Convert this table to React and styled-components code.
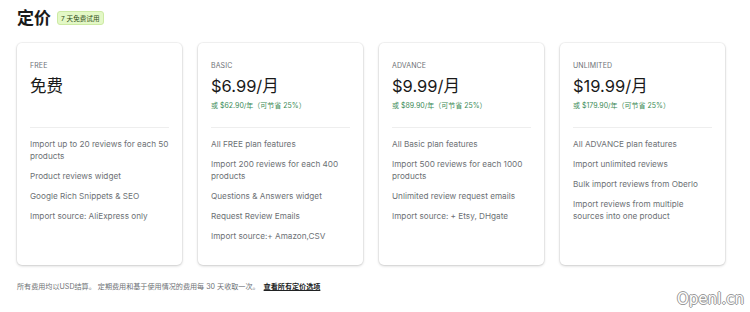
import React from "react";
import styled, { createGlobalStyle } from "styled-components";

const GlobalStyle = createGlobalStyle`
  html, body {
    margin: 0;
    padding: 0;
    background: #ffffff;
  }
  body {
    font-family: Inter, "Noto Sans CJK SC", sans-serif;
    color: #202223;
  }
`;

const Page = styled.div`
  position: relative;
  width: 750px;
  height: 312px;
  padding: 7px 17px 0 17px;
  box-sizing: border-box;
  overflow: hidden;
`;

const Header = styled.div`
  display: flex;
  align-items: center;
  gap: 6px;
  height: 22px;
`;

const Title = styled.h1`
  margin: 0;
  font-size: 17px;
  font-weight: 700;
  line-height: 22px;
  color: #1a1a1a;
`;

const Badge = styled.span`
  display: inline-flex;
  align-items: center;
  height: 12px;
  padding: 0 3px;
  border-radius: 3px;
  background: #e3f8c6;
  border: 1px solid #cdeaa4;
  font-size: 6.6px;
  color: #2f4d17;
`;

const Cards = styled.div`
  display: grid;
  grid-template-columns: repeat(4, 165px);
  gap: 16px;
  margin-top: 14px;
`;

const Card = styled.div`
  height: 222px;
  box-sizing: border-box;
  padding: 18px 13px 0 13px;
  background: #fff;
  border-radius: 5px;
  box-shadow: 0 0 0 1px rgba(0, 0, 0, 0.04), 0 1px 3px rgba(0, 0, 0, 0.18);
`;

const PlanName = styled.div`
  font-size: 7px;
  line-height: 10px;
  color: #6d7175;
  letter-spacing: 0.1px;
`;

const Price = styled.div`
  margin-top: 4px;
  font-size: 16.5px;
  line-height: 22px;
  color: #1a1a1a;
`;

const Yearly = styled.div`
  height: 11px;
  margin-top: 3px;
  font-size: 7px;
  line-height: 11px;
  color: #3b8a55;
`;

const Divider = styled.div`
  height: 1px;
  margin: 16px 0 10px 0;
  background: #eeeeee;
`;

const Features = styled.ul`
  list-style: none;
  margin: 0;
  padding: 0;
  display: flex;
  flex-direction: column;
  gap: 8px;
`;

const Feature = styled.li`
  font-size: 8.2px;
  line-height: 12px;
  color: #6d7175;
`;

const Footer = styled.p`
  margin: 17px 0 0 0;
  font-size: 7.1px;
  line-height: 10px;
  color: #6d7175;
`;

const FooterLink = styled.a`
  margin-left: 4px;
  font-weight: 700;
  color: #202223;
  text-decoration: underline;
`;

const Watermark = styled.div`
  position: absolute;
  right: 6px;
  bottom: 4px;
  font-family: "DejaVu Sans", sans-serif;
  font-size: 15px;
  color: #fff;
  text-shadow: -1px 0 #9a9a9a, 1px 0 #9a9a9a, 0 -1px #9a9a9a, 0 1px #9a9a9a;
`;

const plans = [
  {
    name: "FREE",
    price: "免费",
    yearly: "",
    features: [
      "Import up to 20 reviews for each 50 products",
      "Product reviews widget",
      "Google Rich Snippets & SEO",
      "Import source: AliExpress only",
    ],
  },
  {
    name: "BASIC",
    price: "$6.99/月",
    yearly: "或 $62.90/年（可节省 25%）",
    features: [
      "All FREE plan features",
      "Import 200 reviews for each 400 products",
      "Questions & Answers widget",
      "Request Review Emails",
      "Import source:+ Amazon,CSV",
    ],
  },
  {
    name: "ADVANCE",
    price: "$9.99/月",
    yearly: "或 $89.90/年（可节省 25%）",
    features: [
      "All Basic plan features",
      "Import 500 reviews for each 1000 products",
      "Unlimited review request emails",
      "Import source: + Etsy, DHgate",
    ],
  },
  {
    name: "UNLIMITED",
    price: "$19.99/月",
    yearly: "或 $179.90/年（可节省 25%）",
    features: [
      "All ADVANCE plan features",
      "Import unlimited reviews",
      "Bulk import reviews from Oberlo",
      "Import reviews from multiple sources into one product",
    ],
  },
];

const App = () => {
  return (
    <Page>
      <GlobalStyle />
      <Header>
        <Title>定价</Title>
        <Badge>7 天免费试用</Badge>
      </Header>

      <Cards>
        {plans.map((plan) => (
          <Card key={plan.name}>
            <PlanName>{plan.name}</PlanName>
            <Price>{plan.price}</Price>
            <Yearly>{plan.yearly}</Yearly>
            <Divider />
            <Features>
              {plan.features.map((f) => (
                <Feature key={f}>{f}</Feature>
              ))}
            </Features>
          </Card>
        ))}
      </Cards>

      <Footer>
        所有费用均以USD结算。 定期费用和基于使用情况的费用每 30 天收取一次。
        <FooterLink href="#">查看所有定价选项</FooterLink>
      </Footer>

      <Watermark>OpenI.cn</Watermark>
    </Page>
  );
};

export default App;
